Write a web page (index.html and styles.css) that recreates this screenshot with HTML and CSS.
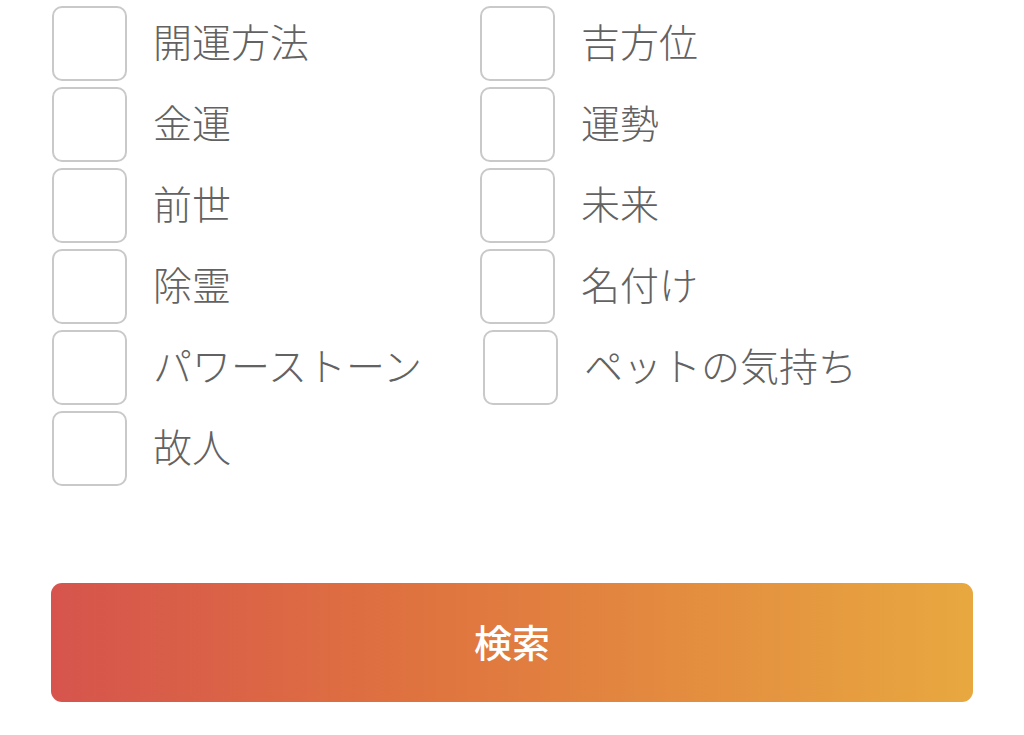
FILE: index.html
```html
<!DOCTYPE html>
<html lang="ja">
<head>
<meta charset="utf-8">
<title>検索</title>
<link rel="stylesheet" href="styles.css">
</head>
<body>
<div class="page">
  <div class="options">
    <label class="opt"><span class="box"></span><span class="label">開運方法</span></label>
    <label class="opt"><span class="box"></span><span class="label">吉方位</span></label>
    <label class="opt"><span class="box"></span><span class="label">金運</span></label>
    <label class="opt"><span class="box"></span><span class="label">運勢</span></label>
    <label class="opt"><span class="box"></span><span class="label">前世</span></label>
    <label class="opt"><span class="box"></span><span class="label">未来</span></label>
    <label class="opt"><span class="box"></span><span class="label">除霊</span></label>
    <label class="opt"><span class="box"></span><span class="label">名付け</span></label>
    <label class="opt"><span class="box"></span><span class="label">パワーストーン</span></label>
    <label class="opt opt-pushed"><span class="box"></span><span class="label">ペットの気持ち</span></label>
    <label class="opt"><span class="box"></span><span class="label">故人</span></label>
  </div>
  <button class="search" type="button">検索</button>
</div>
</body>
</html>
```

FILE: styles.css
```css
html, body {
  margin: 0;
  padding: 0;
  background: #ffffff;
}

body {
  font-family: "Noto Sans CJK JP", "Noto Sans", sans-serif;
}

.page {
  padding: 6px 51px 0 51px;
}

.options {
  display: grid;
  grid-template-columns: 428px 1fr;
  row-gap: 6px;
  padding-left: 1px;
}

.opt {
  display: flex;
  align-items: center;
  gap: 26px;
  height: 75px;
}

.opt-pushed {
  margin-left: 3px;
}

.box {
  flex: none;
  width: 75px;
  height: 75px;
  box-sizing: border-box;
  border: 2px solid #c9c9c9;
  border-radius: 10px;
  background: #fff;
}

.label {
  font-size: 39px;
  font-weight: 200;
  color: #626262;
  white-space: nowrap;
  line-height: 1;
  margin-top: -6px;
}

.search {
  display: block;
  width: 922px;
  height: 119px;
  margin-top: 97px;
  border: none;
  border-radius: 11px;
  background: linear-gradient(to right, #d6544d 0%, #df733f 40%, #e8a83f 100%);
  color: #ffffff;
  font-family: "Noto Sans CJK JP", "Noto Sans", sans-serif;
  font-size: 38px;
  font-weight: 500;
  padding: 0 0 5px 0;
}
```
